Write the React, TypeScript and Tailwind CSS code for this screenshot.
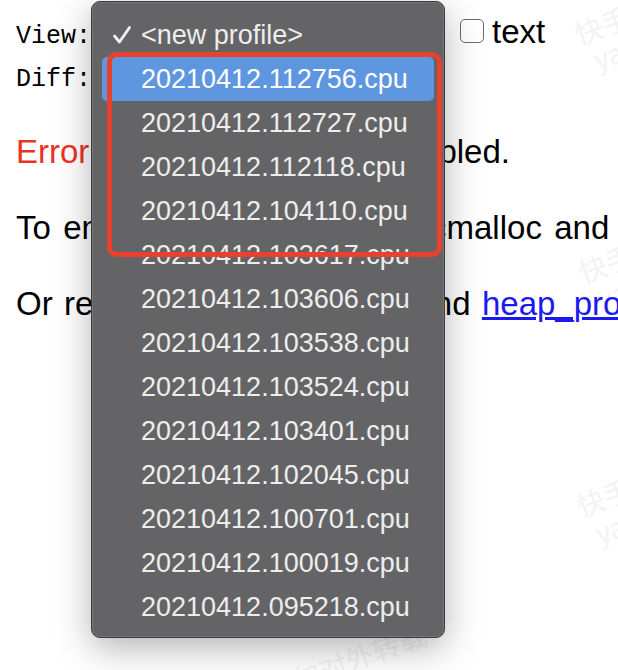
import React from 'react';

const files = [
  '20210412.112756.cpu',
  '20210412.112727.cpu',
  '20210412.112118.cpu',
  '20210412.104110.cpu',
  '20210412.103617.cpu',
  '20210412.103606.cpu',
  '20210412.103538.cpu',
  '20210412.103524.cpu',
  '20210412.103401.cpu',
  '20210412.102045.cpu',
  '20210412.100701.cpu',
  '20210412.100019.cpu',
  '20210412.095218.cpu',
];

function Check() {
  return (
    <svg width="20" height="20" viewBox="0 0 20 20" fill="none" className="absolute left-[10px] top-[12px]">
      <path d="M2.5 11 L7.5 17 L17.5 2.5" stroke="#f2f2f2" strokeWidth="2.8" strokeLinecap="round" strokeLinejoin="round" />
    </svg>
  );
}

function Watermark({ className, text }: { className: string; text: string }) {
  return (
    <span
      className={`absolute whitespace-nowrap -rotate-[20deg] text-[28px] text-[#f3f3f3] ${className}`}
      style={{ fontFamily: '"Noto Sans CJK SC", "Liberation Sans", sans-serif' }}
    >
      {text}
    </span>
  );
}

const mono = { fontFamily: '"Liberation Mono", "Courier New", monospace' };

export default function App() {
  return (
    <div className="relative w-[618px] h-[670px] overflow-hidden bg-white text-black" style={{ fontFamily: '"Liberation Sans", Arial, sans-serif' }}>
      {/* faint watermarks */}
      <Watermark className="left-[572px] top-[-6px]" text="快手内部" />
      <Watermark className="left-[592px] top-[28px]" text="yang" />
      <Watermark className="left-[576px] top-[232px]" text="快手内部" />
      <Watermark className="left-[596px] top-[268px]" text="yang" />
      <Watermark className="left-[574px] top-[466px]" text="快手内部" />
      <Watermark className="left-[594px] top-[502px]" text="yang" />
      <Watermark className="left-[262px] top-[640px]" text="请勿对外转载" />

      <div className="relative pt-[13px] pl-[16px]">
        <div className="flex items-baseline h-[45px]">
          <span className="text-[25px] leading-[43px]" style={mono}>View:</span>
          <span className="w-[369px]" />
          <div className="w-[24px] h-[24px] rounded-[5px] border-[1.5px] border-[#6b6b6b] bg-white" />
          <span className="ml-[8px] text-[33px] leading-[38px]">text</span>
        </div>
        <div className="flex items-baseline h-[43px]">
          <span className="text-[25px] leading-[43px]" style={mono}>Diff:</span>
        </div>

        <div className="mt-[32px] text-[33px] leading-[38px] whitespace-nowrap">
          <p className="[word-spacing:-1px]">
            <span className="text-[#ea3323]">Error</span>: heap profiler is not enabled.
          </p>
          <p className="mt-[38px] [word-spacing:3.2px]">
            To enable all profilers, link tcmalloc and define macros BRPC_ENABLE_CPU_PROFILER
          </p>
          <p className="mt-[38px] [word-spacing:2.2px]">
            Or read docs: <a className="text-[#1a1aee] underline" href="#">cpu_profiler</a> and{' '}
            <a className="text-[#1a1aee] underline" href="#">heap_profiler</a>
          </p>
        </div>
      </div>

      {/* open popup menu */}
      <div className="absolute left-[91px] top-[1px] w-[354px] pt-[11px] pb-[8px] rounded-[9px] border border-[#3a3a3c] bg-[#646466] text-[27px] text-[#ededed] shadow-[inset_0_0_0_1px_rgba(255,255,255,0.12),0_10px_36px_rgba(0,0,0,0.3)]">
        <div className="relative mx-[10px] h-[44px] leading-[44px] pl-[39px]">
          <Check />
          &lt;new profile&gt;
        </div>
        {files.map((f, i) => (
          <div
            key={f}
            className={`mx-[10px] h-[44px] leading-[44px] pl-[39px] rounded-[5px] ${i === 0 ? 'bg-[#5e96e0] text-white' : ''}`}
          >
            {f}
          </div>
        ))}
      </div>

      {/* annotation */}
      <div className="absolute left-[107px] top-[52px] w-[335px] h-[205px] rounded-[10px] border-[5px] border-[#e9412e]" />
    </div>
  );
}
